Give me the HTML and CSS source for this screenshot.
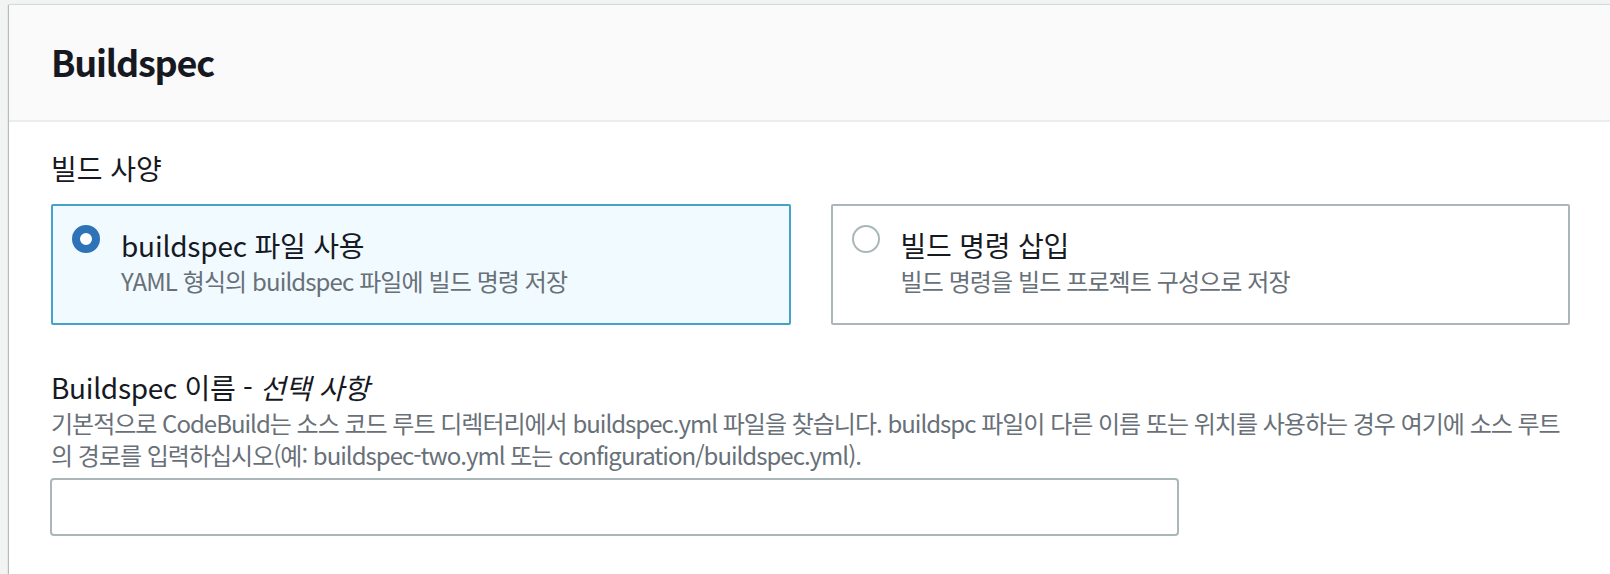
FILE: index.html
```html
<!DOCTYPE html>
<html lang="ko">
<head>
<meta charset="utf-8">
<title>Buildspec</title>
<link rel="stylesheet" href="styles.css">
</head>
<body>
  <section class="card">
    <header class="card-header">
      <h2 class="card-title">Buildspec</h2>
    </header>
    <div class="card-body">
      <div class="field">
        <div class="field-label">빌드 사양</div>
        <div class="tiles">
          <label class="tile tile-selected">
            <span class="radio radio-on"></span>
            <span class="tile-text">
              <span class="tile-title">buildspec 파일 사용</span>
              <span class="tile-desc">YAML 형식의 buildspec 파일에 빌드 명령 저장</span>
            </span>
          </label>
          <label class="tile">
            <span class="radio"></span>
            <span class="tile-text">
              <span class="tile-title">빌드 명령 삽입</span>
              <span class="tile-desc">빌드 명령을 빌드 프로젝트 구성으로 저장</span>
            </span>
          </label>
        </div>
      </div>
      <div class="field field-name">
        <div class="field-label field-label-name">Buildspec 이름 - <i class="optional">선택 사항</i></div>
        <p class="field-desc">기본적으로 CodeBuild는 소스 코드 루트 디렉터리에서 buildspec.yml 파일을 찾습니다. buildspc 파일이 다른 이름 또는 위치를 사용하는 경우 여기에 소스 루트 의 경로를 입력하십시오(예: buildspec-two.yml 또는 configuration/buildspec.yml).</p>
        <input class="text-input" type="text">
      </div>
    </div>
  </section>
</body>
</html>
```

FILE: styles.css
```css
html, body {
  margin: 0;
  padding: 0;
  background: #f2f3f3;
}
body {
  padding: 5px 0 0 9px;
  font-family: "Noto Sans CJK KR", "Noto Sans", sans-serif;
  color: #16191f;
  overflow: hidden;
}
.card {
  background: #ffffff;
  box-shadow: -1px 0 1px rgba(0, 28, 36, 0.25), 0 -1px 1px rgba(0, 28, 36, 0.08);
  min-height: 620px;
}
.card-header {
  background: #fafafa;
  border-bottom: 2px solid #eaeded;
  height: 115px;
  display: flex;
  align-items: center;
  padding: 0 42px;
}
.card-title {
  margin: 0;
  font-size: 36px;
  line-height: 44px;
  font-weight: 700;
  letter-spacing: -1.2px;
  color: #16191f;
  padding-bottom: 3px;
}
.card-body {
  padding: 26px 40px 40px 42px;
}
.field-label {
  font-size: 28px;
  line-height: 40px;
  color: #16191f;
}
.field-label-name {
  letter-spacing: -0.3px;
}
.optional {
  font-style: italic;
}
.tiles {
  display: flex;
  gap: 40px;
  margin-top: 16px;
}
.tile {
  flex: 1;
  display: flex;
  align-items: flex-start;
  gap: 21px;
  border: 2px solid #aab7b8;
  border-radius: 2px;
  padding: 19px 19px 26px 19px;
  background: #ffffff;
  height: 121px;
  box-sizing: border-box;
}
.tile-selected {
  background: #f1faff;
  border-color: #44a3c9;
}
.radio {
  flex: none;
  width: 28px;
  height: 28px;
  border-radius: 50%;
  border: 2px solid #aab7b8;
  box-sizing: border-box;
  background: #ffffff;
}
.radio-on {
  border: 8px solid #2e73b8;
  background: #ffffff;
}
.tile-text {
  display: flex;
  flex-direction: column;
}
.tile-title {
  font-size: 28px;
  line-height: 40px;
  color: #16191f;
  letter-spacing: -0.2px;
}
.tile-desc {
  font-size: 24px;
  line-height: 32px;
  color: #687078;
  letter-spacing: -0.9px;
}
.field-name {
  margin-top: 42px;
}
.field-desc {
  margin: 0;
  font-size: 24px;
  line-height: 32px;
  color: #687078;
  letter-spacing: -1px;
}
.text-input {
  display: block;
  margin-top: 7px;
  width: 1129px;
  height: 58px;
  box-sizing: border-box;
  border: 2px solid #aab7b8;
  border-radius: 4px;
  background: #ffffff;
  margin-left: -1px;
}
```
